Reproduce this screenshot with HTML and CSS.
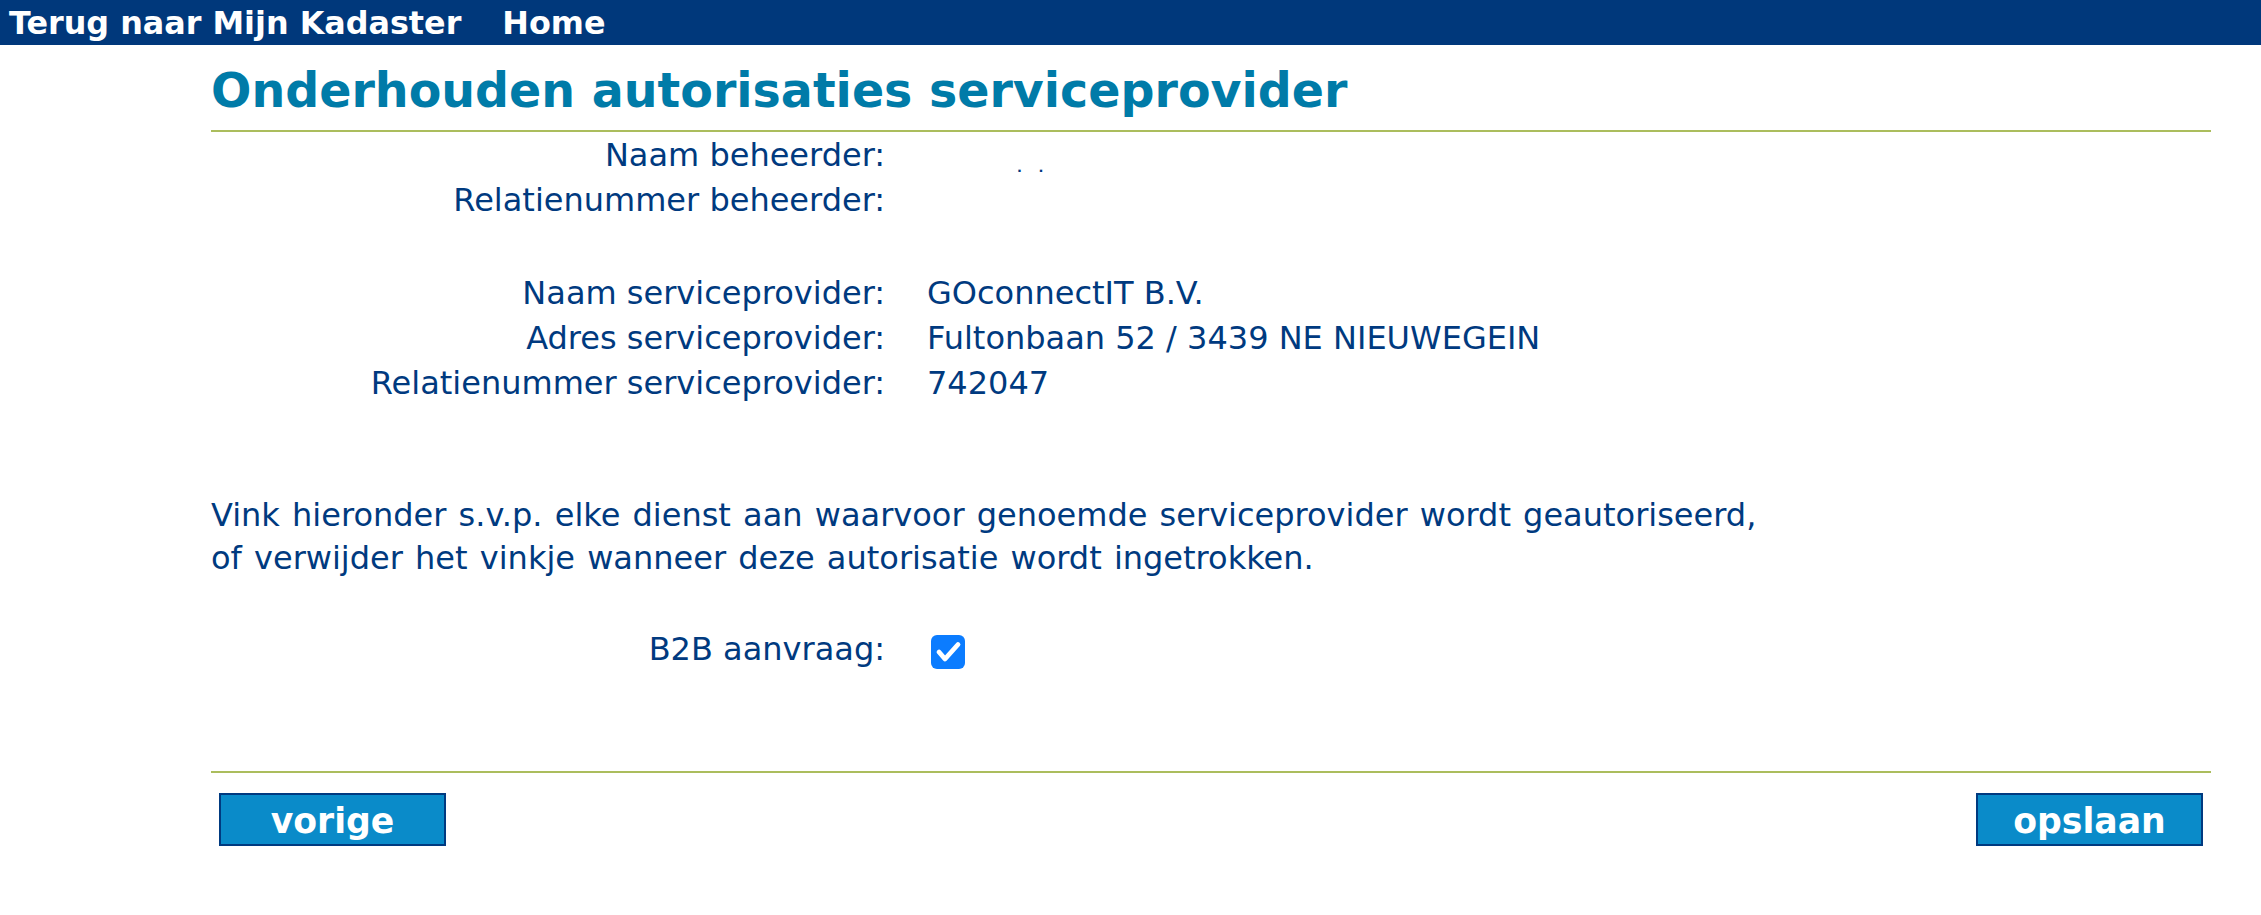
FILE: index.html
```html
<!DOCTYPE html>
<html lang="nl">
<head>
<meta charset="utf-8">
<title>Onderhouden autorisaties serviceprovider</title>
<link rel="stylesheet" href="styles.css">
</head>
<body>
<nav class="topbar">
  <a class="topbar-link" href="#">Terug naar Mijn Kadaster</a>
  <a class="topbar-link" href="#">Home</a>
</nav>
<main class="page">
  <h1 class="title">Onderhouden autorisaties serviceprovider</h1>
  <hr class="rule">
  <div class="details">
    <div class="label">Naam beheerder:</div>
    <div class="value"><span class="dots">. .</span></div>
    <div class="label">Relatienummer beheerder:</div>
    <div class="value"></div>
    <div class="spacer"></div>
    <div class="label">Naam serviceprovider:</div>
    <div class="value">GOconnectIT B.V.</div>
    <div class="label">Adres serviceprovider:</div>
    <div class="value">Fultonbaan 52 / 3439 NE NIEUWEGEIN</div>
    <div class="label">Relatienummer serviceprovider:</div>
    <div class="value">742047</div>
  </div>
  <p class="intro">Vink hieronder s.v.p. elke dienst aan waarvoor genoemde serviceprovider wordt geautoriseerd,<br>of verwijder het vinkje wanneer deze autorisatie wordt ingetrokken.</p>
  <div class="details services">
    <div class="label">B2B aanvraag:</div>
    <div class="value check-cell">
      <span class="checkbox" role="checkbox" aria-checked="true">
        <svg viewBox="0 0 34 34" width="34" height="34"><path d="M8 17 L14 24 L27 9.5" fill="none" stroke="#fff" stroke-width="4.8" stroke-linecap="round" stroke-linejoin="round"/></svg>
      </span>
    </div>
  </div>
  <hr class="rule rule-bottom">
  <div class="actions">
    <button class="btn" type="button">vorige</button>
    <button class="btn" type="button">opslaan</button>
  </div>
</main>
</body>
</html>
```
FILE: styles.css
```css
body {
  margin: 0;
  font-family: "DejaVu Sans", Verdana, sans-serif;
  color: #003a7f;
  background: #fff;
}

.topbar {
  display: flex;
  gap: 41px;
  height: 45px;
  padding-left: 9px;
  background: #00387b;
  font-weight: bold;
  font-size: 31.8px;
  line-height: 45px;
}

.topbar-link {
  color: #fff;
  text-decoration: none;
}

.page {
  margin-left: 211px;
  width: 2000px;
}

.title {
  margin: 17px 0 11px;
  font-size: 47.5px;
  line-height: 1.2;
  font-weight: bold;
  color: #007ba8;
  white-space: nowrap;
}

.rule {
  border: 0;
  height: 2px;
  margin: 0;
  background: #abbd5d;
}

.details {
  display: grid;
  grid-template-columns: 674px 1fr;
  column-gap: 42px;
  margin-top: 1px;
  font-size: 32px;
  line-height: 45px;
}

.label {
  text-align: right;
  white-space: nowrap;
}

.value {
  white-space: nowrap;
}

.dots {
  position: relative;
  top: 6px;
  margin-left: 90px;
  font-size: 13px;
  font-weight: bold;
  line-height: 0;
  word-spacing: 12px;
}

.spacer {
  grid-column: 1 / -1;
  height: 48px;
}

.intro {
  margin: 88px 0 0;
  font-size: 32px;
  line-height: 43px;
  word-spacing: 2px;
}

.services {
  margin-top: 47px;
}

.check-cell {
  display: flex;
  align-items: center;
}

.checkbox {
  display: inline-flex;
  width: 34px;
  height: 34px;
  margin-left: 4px;
  margin-top: 4px;
  border-radius: 6px;
  background: #0b7cff;
}

.rule-bottom {
  margin-top: 99px;
}

.actions {
  display: flex;
  justify-content: space-between;
  padding: 20px 8px 0;
}

.btn {
  box-sizing: border-box;
  width: 227px;
  height: 53px;
  padding: 3px 0 0;
  border: 2px solid #003a80;
  background: #0a8bc9;
  color: #fff;
  font-family: "DejaVu Sans", Verdana, sans-serif;
  font-weight: bold;
  font-size: 34.65px;
  line-height: 1;
  cursor: pointer;
}
```
